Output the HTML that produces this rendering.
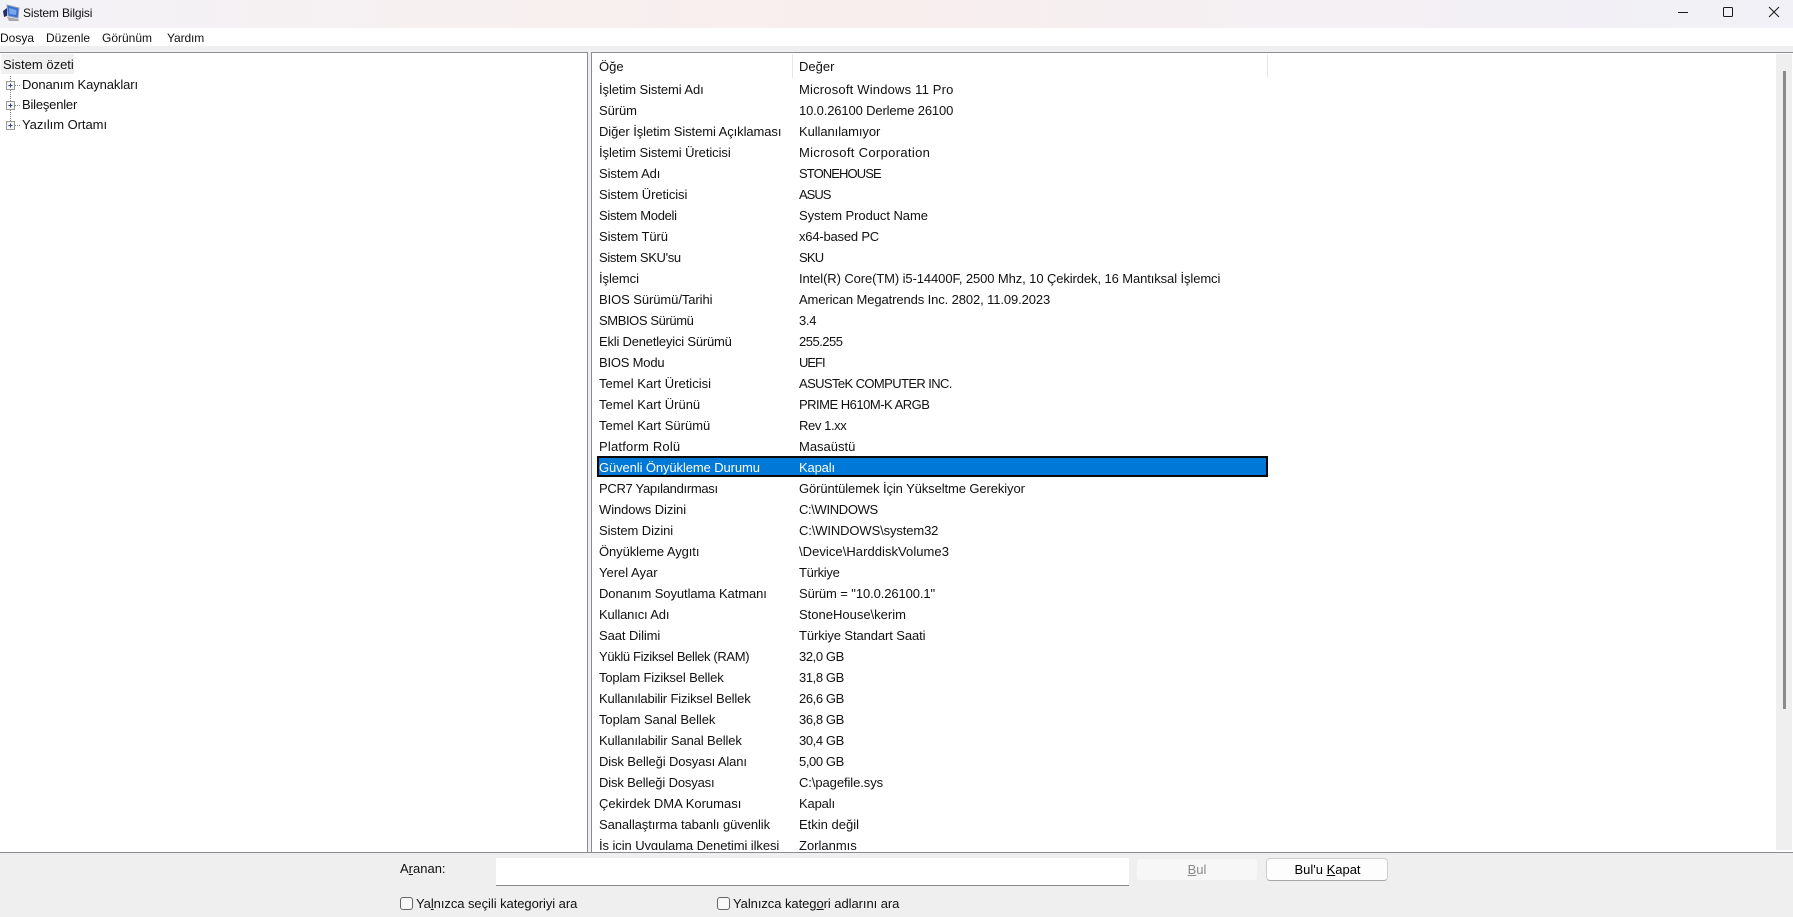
<!DOCTYPE html>
<html lang="tr">
<head>
<meta charset="utf-8">
<title>Sistem Bilgisi</title>
<style>
html,body{margin:0;padding:0;width:1793px;height:917px;overflow:hidden;background:#fff}
body{font-family:"Liberation Sans",sans-serif;font-size:13px;color:#111;position:relative}
.a{position:absolute;white-space:nowrap}
#title{left:0;top:0;width:1793px;height:28px;background:linear-gradient(90deg,#f3f2f7 0%,#f7f0ef 30%,#f8eeee 50%,#f4f0f4 75%,#f1f1f7 100%)}
#band{left:0;top:46px;width:1793px;height:6px;background:#efefef}
#line{left:0;top:52px;width:1793px;height:1px;background:#8b8b92}
.t{line-height:20px;height:20px}
.m{font-size:12px}
.tr{letter-spacing:-.1px}
#vs{left:587px;top:52px;width:5px;height:800px;background:#efefef;border-left:1px solid #8b8b92;border-right:1px solid #8b8b92;box-sizing:border-box}
#list{left:592px;top:53px;width:1201px;height:797px;overflow:hidden}
#rows{position:absolute;left:0;top:26px;width:1184px}
.r{position:relative;height:21px;line-height:21px}
.r b{font-weight:400;position:absolute;left:7px;top:0;letter-spacing:-.08px}
.r i{font-style:normal;position:absolute;left:207px;top:0}
.r.sel{color:#fff}
#selbox{left:597px;top:456px;width:671px;height:21px;box-sizing:border-box;background:#0078d7;border:2px solid #0a0a0a}
#bottom{left:0;top:852px;width:1793px;height:65px;background:#efefef;border-top:1px solid #8b8b92;box-sizing:border-box}
#input{left:496px;top:858px;width:633px;height:28px;background:#fff;border-bottom:1px solid #8a8a8a;box-sizing:border-box}
.btn{top:858px;height:23px;width:122px;box-sizing:border-box;border-radius:4px;text-align:center;line-height:21px}
#b1{left:1136px;background:#f7f7f7;border:1px solid #f0f0f0;color:#8a8a8a}
#b2{left:1266px;background:#fdfdfd;border:1px solid #cfcfcf;border-bottom-color:#a8a8a8;color:#000;padding-left:1px}
.cb{top:897px;width:13px;height:13px;box-sizing:border-box;background:#f8f8f8;border:1px solid #666;border-radius:3px}
.l{letter-spacing:-.06px}
u{text-underline-offset:1px}
</style>
</head>
<body>
<div class="a" id="title"></div>
<svg class="a" style="left:2px;top:2px" width="20" height="22" viewBox="0 0 20 22">
  <path d="M5 3 L17 6 L16 16 L6 14 Z" fill="#3a6fd0" stroke="#9aa5b5" stroke-width="1"/>
  <path d="M7 6 L14.5 8 L14 13 L7.5 12 Z" fill="#7ba5ee"/>
  <path d="M5 15 L16 17 L17 19 L7 19 Z" fill="#a7a7ad"/>
  <path d="M1 9 L5 6 L5 14 L2 15 Z" fill="#1c2e74"/>
</svg>
<div class="a t m" style="left:23px;top:3px;letter-spacing:-.15px">Sistem Bilgisi</div>
<svg class="a" style="left:1670px;top:6px" width="120" height="20" viewBox="0 0 120 20" fill="none" stroke="#1a1a1a" stroke-width="1">
  <path d="M8 6.5 H18"/>
  <rect x="53.5" y="1.5" width="9" height="9" rx="1"/>
  <path d="M99 1 L109 11 M109 1 L99 11"/>
</svg>
<div class="a t m" style="left:0;top:28px">Dosya</div>
<div class="a t m" style="left:46px;top:28px">Düzenle</div>
<div class="a t m" style="left:102px;top:28px">Görünüm</div>
<div class="a t m" style="left:167px;top:28px;letter-spacing:-.1px">Yardım</div>
<div class="a" id="band"></div>
<div class="a" id="line"></div>

<div class="a" style="left:1px;top:54px;width:73px;height:20px;background:#f0f0f0"></div>
<div class="a t" style="left:3px;top:55px">Sistem özeti</div>
<svg class="a" style="left:4px;top:75px" width="18" height="58" viewBox="0 0 18 58">
  <path d="M6.5 -1 V53" stroke="#888" stroke-dasharray="1 1" fill="none"/>
  <path d="M11 10.5 H16 M11 30.5 H16 M11 50.5 H16" stroke="#888" stroke-dasharray="1 1" fill="none"/>
  <g fill="#f4f4f4" stroke="#9a9a9a"><rect x="2.5" y="6.5" width="8" height="8"/><rect x="2.5" y="26.5" width="8" height="8"/><rect x="2.5" y="46.5" width="8" height="8"/></g>
  <path d="M4.5 10.5 H8.5 M6.5 8.5 V12.5 M4.5 30.5 H8.5 M6.5 28.5 V32.5 M4.5 50.5 H8.5 M6.5 48.5 V52.5" stroke="#2b3f7a" fill="none"/>
</svg>
<div class="a t tr" style="left:22px;top:75px">Donanım Kaynakları</div>
<div class="a t" style="left:22px;top:95px;letter-spacing:-.2px">Bileşenler</div>
<div class="a t" style="left:22px;top:115px;letter-spacing:-.05px">Yazılım Ortamı</div>

<div class="a" id="vs"></div>

<div class="a t" style="left:599px;top:57px">Öğe</div>
<div class="a t" style="left:799px;top:57px">Değer</div>
<div class="a" style="left:792px;top:54px;width:1px;height:24px;background:#e6e6e6"></div>
<div class="a" style="left:1267px;top:54px;width:1px;height:24px;background:#e6e6e6"></div>

<div class="a" id="selbox"></div>

<div class="a" id="list">
<div id="rows">
<div class="r"><b>İşletim Sistemi Adı</b><i style="letter-spacing:.19px">Microsoft Windows 11 Pro</i></div>
<div class="r"><b>Sürüm</b><i style="letter-spacing:-.14px">10.0.26100 Derleme 26100</i></div>
<div class="r"><b>Diğer İşletim Sistemi Açıklaması</b><i style="letter-spacing:-.08px">Kullanılamıyor</i></div>
<div class="r"><b>İşletim Sistemi Üreticisi</b><i style="letter-spacing:.33px">Microsoft Corporation</i></div>
<div class="r"><b>Sistem Adı</b><i style="letter-spacing:-.9px">STONEHOUSE</i></div>
<div class="r"><b>Sistem Üreticisi</b><i style="letter-spacing:-1px">ASUS</i></div>
<div class="r"><b style="letter-spacing:-.3px">Sistem Modeli</b><i style="letter-spacing:-.06px">System Product Name</i></div>
<div class="r"><b>Sistem Türü</b><i style="letter-spacing:-.2px">x64-based PC</i></div>
<div class="r"><b style="letter-spacing:-.35px">Sistem SKU'su</b><i style="letter-spacing:-.8px">SKU</i></div>
<div class="r"><b>İşlemci</b><i style="letter-spacing:-.1px">Intel(R) Core(TM) i5-14400F, 2500 Mhz, 10 Çekirdek, 16 Mantıksal İşlemci</i></div>
<div class="r"><b>BIOS Sürümü/Tarihi</b><i style="letter-spacing:-.11px">American Megatrends Inc. 2802, 11.09.2023</i></div>
<div class="r"><b style="letter-spacing:-.4px">SMBIOS Sürümü</b><i style="letter-spacing:-.3px">3.4</i></div>
<div class="r"><b style="letter-spacing:-.2px">Ekli Denetleyici Sürümü</b><i style="letter-spacing:-.5px">255.255</i></div>
<div class="r"><b style="letter-spacing:-.2px">BIOS Modu</b><i style="letter-spacing:-1px">UEFI</i></div>
<div class="r"><b style="letter-spacing:0">Temel Kart Üreticisi</b><i style="letter-spacing:-.6px">ASUSTeK COMPUTER INC.</i></div>
<div class="r"><b style="letter-spacing:0">Temel Kart Ürünü</b><i style="letter-spacing:-.5px">PRIME H610M-K ARGB</i></div>
<div class="r"><b style="letter-spacing:0">Temel Kart Sürümü</b><i style="letter-spacing:-.4px">Rev 1.xx</i></div>
<div class="r"><b style="letter-spacing:.2px">Platform Rolü</b><i>Masaüstü</i></div>
<div class="r sel"><b style="letter-spacing:-.1px">Güvenli Önyükleme Durumu</b><i style="letter-spacing:-.15px">Kapalı</i></div>
<div class="r"><b style="letter-spacing:-.3px">PCR7 Yapılandırması</b><i style="letter-spacing:-.1px">Görüntülemek İçin Yükseltme Gerekiyor</i></div>
<div class="r"><b>Windows Dizini</b><i style="letter-spacing:-.35px">C:\WINDOWS</i></div>
<div class="r"><b>Sistem Dizini</b><i style="letter-spacing:-.12px">C:\WINDOWS\system32</i></div>
<div class="r"><b>Önyükleme Aygıtı</b><i style="letter-spacing:.05px">\Device\HarddiskVolume3</i></div>
<div class="r"><b style="letter-spacing:0">Yerel Ayar</b><i style="letter-spacing:-.3px">Türkiye</i></div>
<div class="r"><b>Donanım Soyutlama Katmanı</b><i style="letter-spacing:-.1px">Sürüm = "10.0.26100.1"</i></div>
<div class="r"><b style="letter-spacing:-.15px">Kullanıcı Adı</b><i>StoneHouse\kerim</i></div>
<div class="r"><b>Saat Dilimi</b><i style="letter-spacing:-.1px">Türkiye Standart Saati</i></div>
<div class="r"><b style="letter-spacing:-.35px">Yüklü Fiziksel Bellek (RAM)</b><i style="letter-spacing:-.4px">32,0 GB</i></div>
<div class="r"><b style="letter-spacing:-.15px">Toplam Fiziksel Bellek</b><i style="letter-spacing:-.4px">31,8 GB</i></div>
<div class="r"><b style="letter-spacing:-.15px">Kullanılabilir Fiziksel Bellek</b><i style="letter-spacing:-.4px">26,6 GB</i></div>
<div class="r"><b>Toplam Sanal Bellek</b><i style="letter-spacing:-.4px">36,8 GB</i></div>
<div class="r"><b style="letter-spacing:-.12px">Kullanılabilir Sanal Bellek</b><i style="letter-spacing:-.4px">30,4 GB</i></div>
<div class="r"><b style="letter-spacing:-.12px">Disk Belleği Dosyası Alanı</b><i style="letter-spacing:-.4px">5,00 GB</i></div>
<div class="r"><b style="letter-spacing:-.15px">Disk Belleği Dosyası</b><i style="letter-spacing:-.08px">C:\pagefile.sys</i></div>
<div class="r"><b style="letter-spacing:0">Çekirdek DMA Koruması</b><i style="letter-spacing:-.15px">Kapalı</i></div>
<div class="r"><b>Sanallaştırma tabanlı güvenlik</b><i>Etkin değil</i></div>
<div class="r"><b>İş için Uygulama Denetimi ilkesi</b><i>Zorlanmış</i></div>
</div>
</div>

<div class="a" style="left:1776px;top:54px;width:16px;height:796px;background:#efefef"></div>
<div class="a" style="left:1783px;top:71px;width:3px;height:638px;background:#8b8b8b"></div>

<div class="a" id="bottom"></div>
<div class="a t" style="left:400px;top:859px"><span>A<u>r</u>anan:</span></div>
<div class="a" id="input"></div>
<div class="a btn" id="b1"><u>B</u>ul</div>
<div class="a btn" id="b2">Bul'u <u>K</u>apat</div>
<div class="a cb" style="left:400px"></div>
<div class="a t l" style="left:416px;top:894px">Ya<u>l</u>nızca seçili kategoriyi ara</div>
<div class="a cb" style="left:717px"></div>
<div class="a t l" style="left:733px;top:894px">Yalnızca kateg<u>o</u>ri adlarını ara</div>
</body>
</html>
